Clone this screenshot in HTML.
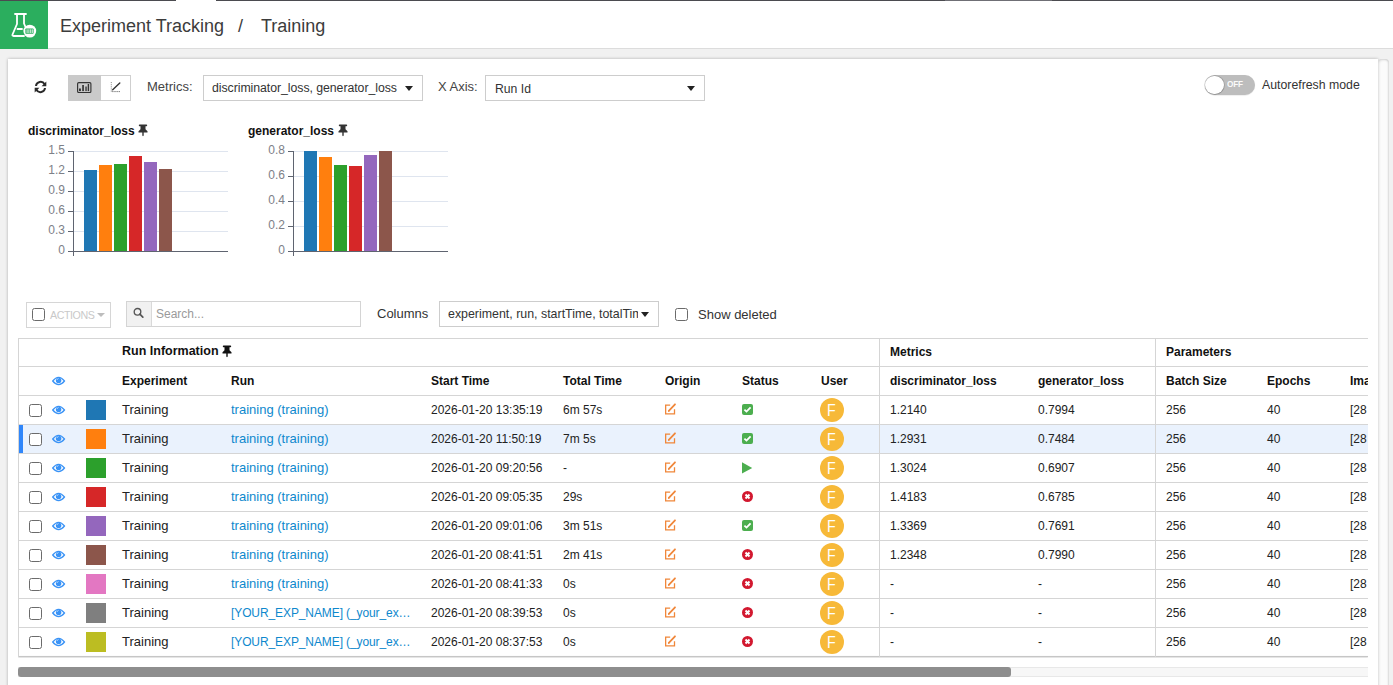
<!DOCTYPE html><html><head><meta charset="utf-8"><style>
*{box-sizing:border-box;margin:0;padding:0}
html,body{width:1393px;height:685px;overflow:hidden;background:#f1f1f1;font-family:"Liberation Sans",sans-serif;color:#222;font-size:13px}
div,span,svg{position:absolute}
.t{white-space:nowrap;line-height:1}
.b{font-weight:bold}
.caret{width:0;height:0;border-left:4px solid transparent;border-right:4px solid transparent;border-top:5px solid #222}
.cb{width:13px;height:13px;border:1.5px solid #6b6b6b;border-radius:2.5px;background:#fff}
.hl{height:1px;background:#d4d4d4}
.vl{width:1px;background:#d4d4d4}
</style></head><body>
<div style="left:0px;top:0px;width:1393px;height:49px;background:#fff;border-bottom:1px solid #dcdcdc"></div>
<div style="left:0px;top:0px;width:48px;height:49px;background:#2bae5e"></div>
<div style="left:0px;top:0px;width:176px;height:1px;background:#4b4b50"></div>
<div style="left:216px;top:0px;width:729px;height:1px;background:#4b4b50"></div>
<div style="left:945px;top:0px;width:107px;height:1px;background:#6f6f75"></div>
<div style="left:1052px;top:0px;width:341px;height:1px;background:#4b4b50"></div>
<svg style="left:0;top:0" width="48" height="48" viewBox="0 0 48 48">
<g fill="none" stroke="#fff" stroke-width="1.8" stroke-linejoin="round" stroke-linecap="round">
<path d="M15 14 H26"/>
<path d="M17 14 V24 L12.5 34.5 Q12 36 13.5 36 H24"/>
<path d="M24 14 V23.5 L25.5 27"/>
<path d="M17.5 29 H22"/>
</g>
<circle cx="29.8" cy="31.1" r="6.4" fill="#fff"/>
<rect x="25.4" y="28.5" width="8.2" height="5.3" rx="0.8" fill="#2bae5e"/>
<g stroke="#fff" stroke-width="0.85"><path d="M27.1 29.3 V33 M28.9 29.3 V33 M30.7 29.3 V33 M32.3 29.3 V33"/></g>
</svg>
<div class="t" style="left:60px;top:16.759999999999998px;font-size:18px;color:#3c3c3c;">Experiment Tracking</div>
<div class="t" style="left:238px;top:16.759999999999998px;font-size:18px;color:#3c3c3c;">/</div>
<div class="t" style="left:261px;top:16.759999999999998px;font-size:18px;color:#3c3c3c;">Training</div>
<div style="left:8px;top:59px;width:1370px;height:640px;background:#fff;box-shadow:0 0 3px rgba(0,0,0,.28)"></div>
<div style="left:1378px;top:59px;width:11px;height:640px;background:#fbfbfb;border-radius:4px;box-shadow:inset 1px 1px 2.5px rgba(0,0,0,.13), inset -1px 0 2px rgba(0,0,0,.13)"></div>
<svg style="left:34px;top:80px" width="13" height="14" viewBox="0 0 13 14">
<g fill="none" stroke="#2a2a2a" stroke-width="2">
<path d="M2 6 A4.6 4.6 0 0 1 10.6 4.2"/>
<path d="M11 8 A4.6 4.6 0 0 1 2.4 9.8"/>
</g>
<path d="M12.3 1.5 V6.2 H7.6 Z" fill="#2a2a2a"/>
<path d="M0.7 12.5 V7.8 H5.4 Z" fill="#2a2a2a"/>
</svg>
<div style="left:68px;top:75px;width:63px;height:26px;background:#fff;border:1px solid #cfcfcf"></div>
<div style="left:68px;top:75px;width:33px;height:26px;background:#cacaca"></div>
<svg style="left:77px;top:82px" width="15" height="11" viewBox="0 0 15 11">
<rect x="0.6" y="0.6" width="13.3" height="9.9" rx="1.2" fill="none" stroke="#333" stroke-width="1.15"/>
<rect x="2" y="6.5" width="1.9" height="2.6" fill="#333"/>
<rect x="5.2" y="3" width="1.7" height="6.1" fill="#333"/>
<rect x="8.2" y="4.5" width="1.7" height="4.6" fill="#555"/>
<rect x="10.7" y="2" width="1.4" height="7.1" fill="#333"/>
</svg>
<svg style="left:110px;top:82px" width="12" height="11" viewBox="0 0 12 11">
<path d="M2.7 7.7 L9.8 1" stroke="#333" stroke-width="1.4" stroke-linecap="round"/>
<path d="M1.3 0.2 V9.6" stroke="#666" stroke-width="0.9" stroke-dasharray="0.9 1.2" fill="none"/>
<path d="M2.4 9.6 H10.6" stroke="#444" stroke-width="1" stroke-dasharray="1 1.1" fill="none"/>
</svg>
<div class="t" style="left:147px;top:80.0px;font-size:13px;color:#444;">Metrics:</div>
<div style="left:203px;top:75px;width:220px;height:26px;background:#fff;border:1px solid #cdcdcd"></div>
<div class="t" style="left:212px;top:82.19px;font-size:12.3px;color:#333;letter-spacing:-0.05px">discriminator_loss, generator_loss</div>
<div style="left:405px;top:86px;width:8px;height:5px;width:0;height:0;border-left:4px solid transparent;border-right:4px solid transparent;border-top:5px solid #222"></div>
<div class="t" style="left:438px;top:80.0px;font-size:13px;color:#444;">X Axis:</div>
<div style="left:485px;top:75px;width:220px;height:26px;background:#fff;border:1px solid #cdcdcd"></div>
<div class="t" style="left:495px;top:82.67px;font-size:12.2px;color:#333;">Run Id</div>
<div style="left:686.5px;top:86.3px;width:8px;height:5px;width:0;height:0;border-left:4px solid transparent;border-right:4px solid transparent;border-top:5px solid #222"></div>
<div style="left:1205px;top:75px;width:50px;height:20px;background:#bdbdbd;border-radius:10px;box-shadow:0 0.5px 1px rgba(0,0,0,.12)"></div>
<div style="left:1205.4px;top:75.6px;width:18.8px;height:18.8px;background:#fff;border-radius:50%;box-shadow:0 0 0 0.8px rgba(0,0,0,.16), 0 0.5px 1px rgba(0,0,0,.2)"></div>
<div class="t" style="left:1227.3px;top:79.0px;font-size:9.8px;color:#fafafa;font-weight:bold;letter-spacing:-0.2px;transform:scaleX(0.84);transform-origin:0 0">OFF</div>
<div class="t" style="left:1262px;top:78.59px;font-size:12.3px;color:#333;">Autorefresh mode</div>
<div class="t" style="left:28px;top:124.84px;font-size:12px;color:#111;font-weight:bold;">discriminator_loss</div>
<div style="left:68px;top:251.0px;width:5px;height:1px;background:#5f6470"></div>
<div class="t" style="left:14px;width:51px;text-align:right;top:243.5px;font-size:12px;color:#7d8088">0</div>
<div style="left:73px;top:231.0px;width:155px;height:1px;background:#dfe5ef"></div>
<div style="left:68px;top:231.0px;width:5px;height:1px;background:#5f6470"></div>
<div class="t" style="left:14px;width:51px;text-align:right;top:223.5px;font-size:12px;color:#7d8088">0.3</div>
<div style="left:73px;top:211.0px;width:155px;height:1px;background:#dfe5ef"></div>
<div style="left:68px;top:211.0px;width:5px;height:1px;background:#5f6470"></div>
<div class="t" style="left:14px;width:51px;text-align:right;top:203.5px;font-size:12px;color:#7d8088">0.6</div>
<div style="left:73px;top:191.0px;width:155px;height:1px;background:#dfe5ef"></div>
<div style="left:68px;top:191.0px;width:5px;height:1px;background:#5f6470"></div>
<div class="t" style="left:14px;width:51px;text-align:right;top:183.5px;font-size:12px;color:#7d8088">0.9</div>
<div style="left:73px;top:171.0px;width:155px;height:1px;background:#dfe5ef"></div>
<div style="left:68px;top:171.0px;width:5px;height:1px;background:#5f6470"></div>
<div class="t" style="left:14px;width:51px;text-align:right;top:163.5px;font-size:12px;color:#7d8088">1.2</div>
<div style="left:73px;top:151.0px;width:155px;height:1px;background:#dfe5ef"></div>
<div style="left:68px;top:151.0px;width:5px;height:1px;background:#5f6470"></div>
<div class="t" style="left:14px;width:51px;text-align:right;top:143.5px;font-size:12px;color:#7d8088">1.5</div>
<div style="left:73px;top:151px;width:1px;height:105px;background:#5f6470"></div>
<div style="left:73px;top:251px;width:155px;height:1px;background:#5f6470"></div>
<div style="left:84.4px;top:170.06666666666666px;width:12.7px;height:80.93333333333334px;background:#1f77b4"></div>
<div style="left:99.4px;top:164.79333333333335px;width:12.7px;height:86.20666666666666px;background:#ff7f0e"></div>
<div style="left:114.4px;top:164.17333333333335px;width:12.7px;height:86.82666666666667px;background:#2ca02c"></div>
<div style="left:129.4px;top:156.44666666666666px;width:12.7px;height:94.55333333333333px;background:#d62728"></div>
<div style="left:144.4px;top:161.87333333333333px;width:12.7px;height:89.12666666666667px;background:#9467bd"></div>
<div style="left:159.4px;top:168.68px;width:12.7px;height:82.32px;background:#8c564b"></div>
<svg style="left:138px;top:124px" width="10" height="13" viewBox="0 0 10 13">
<path d="M1.6 0.4 H8.4 Q9.2 0.4 9.2 1.3 Q9.2 2.2 8.4 2.2 H7.5 V5.2 L9.5 7.3 V8.4 H5.7 V11.6 L5 12.3 L4.3 11.6 V8.4 H0.5 V7.3 L2.5 5.2 V2.2 H1.6 Q0.8 2.2 0.8 1.3 Q0.8 0.4 1.6 0.4 Z" fill="#333"/>
</svg>
<div class="t" style="left:248px;top:124.84px;font-size:12px;color:#111;font-weight:bold;">generator_loss</div>
<div style="left:288px;top:251.0px;width:5px;height:1px;background:#5f6470"></div>
<div class="t" style="left:234px;width:51px;text-align:right;top:243.5px;font-size:12px;color:#7d8088">0</div>
<div style="left:293px;top:226.0px;width:155px;height:1px;background:#dfe5ef"></div>
<div style="left:288px;top:226.0px;width:5px;height:1px;background:#5f6470"></div>
<div class="t" style="left:234px;width:51px;text-align:right;top:218.5px;font-size:12px;color:#7d8088">0.2</div>
<div style="left:293px;top:201.0px;width:155px;height:1px;background:#dfe5ef"></div>
<div style="left:288px;top:201.0px;width:5px;height:1px;background:#5f6470"></div>
<div class="t" style="left:234px;width:51px;text-align:right;top:193.5px;font-size:12px;color:#7d8088">0.4</div>
<div style="left:293px;top:176.0px;width:155px;height:1px;background:#dfe5ef"></div>
<div style="left:288px;top:176.0px;width:5px;height:1px;background:#5f6470"></div>
<div class="t" style="left:234px;width:51px;text-align:right;top:168.5px;font-size:12px;color:#7d8088">0.6</div>
<div style="left:293px;top:151.0px;width:155px;height:1px;background:#dfe5ef"></div>
<div style="left:288px;top:151.0px;width:5px;height:1px;background:#5f6470"></div>
<div class="t" style="left:234px;width:51px;text-align:right;top:143.5px;font-size:12px;color:#7d8088">0.8</div>
<div style="left:293px;top:151px;width:1px;height:105px;background:#5f6470"></div>
<div style="left:293px;top:251px;width:155px;height:1px;background:#5f6470"></div>
<div style="left:304.4px;top:151.075px;width:12.7px;height:99.925px;background:#1f77b4"></div>
<div style="left:319.4px;top:157.45000000000002px;width:12.7px;height:93.54999999999998px;background:#ff7f0e"></div>
<div style="left:334.4px;top:164.66250000000002px;width:12.7px;height:86.33749999999999px;background:#2ca02c"></div>
<div style="left:349.4px;top:166.1875px;width:12.7px;height:84.81249999999999px;background:#d62728"></div>
<div style="left:364.4px;top:154.8625px;width:12.7px;height:96.1375px;background:#9467bd"></div>
<div style="left:379.4px;top:151.125px;width:12.7px;height:99.875px;background:#8c564b"></div>
<svg style="left:337.5px;top:124px" width="10" height="13" viewBox="0 0 10 13">
<path d="M1.6 0.4 H8.4 Q9.2 0.4 9.2 1.3 Q9.2 2.2 8.4 2.2 H7.5 V5.2 L9.5 7.3 V8.4 H5.7 V11.6 L5 12.3 L4.3 11.6 V8.4 H0.5 V7.3 L2.5 5.2 V2.2 H1.6 Q0.8 2.2 0.8 1.3 Q0.8 0.4 1.6 0.4 Z" fill="#333"/>
</svg>
<div style="left:26px;top:302px;width:85px;height:26px;background:#fff;border:1px solid #d6d6d6"></div>
<div style="left:32px;top:308px;width:13px;height:13px;border:1.5px solid #6b6b6b;border-radius:2.5px;background:#fff"></div>
<div class="t" style="left:50px;top:310.44px;font-size:10.7px;color:#c9c9c9;letter-spacing:-0.45px">ACTIONS</div>
<div style="left:97px;top:313px;width:8px;height:4px;width:0;height:0;border-left:4px solid transparent;border-right:4px solid transparent;border-top:4px solid #bdbdbd"></div>
<div style="left:126px;top:301px;width:235px;height:26px;background:#fff;border:1px solid #d4d4d4"></div>
<div style="left:127px;top:302px;width:25px;height:24px;background:#f1f1f1;border-right:1px solid #d9d9d9"></div>
<svg style="left:133px;top:307px" width="11" height="12" viewBox="0 0 11 12">
<circle cx="4.5" cy="4.8" r="3.3" fill="none" stroke="#555" stroke-width="1.35"/>
<path d="M6.9 7.2 L9.8 10.2" stroke="#555" stroke-width="1.7" stroke-linecap="round"/>
</svg>
<div class="t" style="left:156px;top:307.84px;font-size:12px;color:#9a9a9a;">Search...</div>
<div class="t" style="left:377px;top:307.0px;font-size:13px;color:#333;">Columns</div>
<div style="left:439px;top:301px;width:220px;height:26px;background:#fff;border:1px solid #cdcdcd"></div>
<div style="left:448px;top:306px;width:190px;height:18px;overflow:hidden"><div class="t" style="left:0;top:2.3px;font-size:12.4px;color:#333">experiment, run, startTime, totalTime</div></div>
<div style="left:641px;top:312px;width:8px;height:5px;width:0;height:0;border-left:4px solid transparent;border-right:4px solid transparent;border-top:5px solid #222"></div>
<div style="left:675px;top:308px;width:13px;height:13px;border:1.5px solid #6b6b6b;border-radius:2.5px;background:#fff"></div>
<div class="t" style="left:698px;top:307.5px;font-size:13px;color:#333;">Show deleted</div>
<div style="left:18px;top:338px;width:1350px;height:320px;overflow:hidden">
<div style="left:0px;top:0px;width:1350px;height:320px;background:#fff"></div>
<div style="left:0px;top:86px;width:1350px;height:29px;background:#eaf2fd"></div>
<div style="left:1px;top:87px;width:4px;height:28px;background:#2f86fa"></div>
<div style="left:0px;top:0px;width:1350px;height:1px;background:#d5d5d5"></div>
<div style="left:0px;top:28px;width:1350px;height:1px;background:#d5d5d5"></div>
<div style="left:0px;top:57px;width:1350px;height:1px;background:#d5d5d5"></div>
<div style="left:0px;top:86px;width:1350px;height:1px;background:#d5d5d5"></div>
<div style="left:0px;top:115px;width:1350px;height:1px;background:#d5d5d5"></div>
<div style="left:0px;top:144px;width:1350px;height:1px;background:#d5d5d5"></div>
<div style="left:0px;top:173px;width:1350px;height:1px;background:#d5d5d5"></div>
<div style="left:0px;top:202px;width:1350px;height:1px;background:#d5d5d5"></div>
<div style="left:0px;top:231px;width:1350px;height:1px;background:#d5d5d5"></div>
<div style="left:0px;top:260px;width:1350px;height:1px;background:#d5d5d5"></div>
<div style="left:0px;top:289px;width:1350px;height:1px;background:#d5d5d5"></div>
<div style="left:0px;top:318px;width:1350px;height:1.2px;background:#c6c6c6;box-shadow:0 1px 2px rgba(0,0,0,.22)"></div>
<div style="left:0px;top:0px;width:1px;height:319px;background:#d5d5d5"></div>
<div style="left:861px;top:0px;width:1px;height:319px;background:#d5d5d5"></div>
<div style="left:1137px;top:0px;width:1px;height:319px;background:#d5d5d5"></div>
<div class="t" style="left:104px;top:7.420000000000016px;font-size:12.5px;color:#111;font-weight:bold;">Run Information</div>
<svg style="left:204px;top:7px" width="10" height="13" viewBox="0 0 10 13"><path d="M1.6 0.4 H8.4 Q9.2 0.4 9.2 1.3 Q9.2 2.2 8.4 2.2 H7.5 V5.2 L9.5 7.3 V8.4 H5.7 V11.6 L5 12.3 L4.3 11.6 V8.4 H0.5 V7.3 L2.5 5.2 V2.2 H1.6 Q0.8 2.2 0.8 1.3 Q0.8 0.4 1.6 0.4 Z" fill="#111"/></svg>
<div class="t" style="left:872px;top:7.839999999999975px;font-size:12px;color:#111;font-weight:bold;">Metrics</div>
<div class="t" style="left:1148px;top:7.839999999999975px;font-size:12px;color:#111;font-weight:bold;">Parameters</div>
<svg style="left:34px;top:37.69999999999999px" width="14" height="10" viewBox="0 0 14 10"><path d="M0.7 5 Q6.6 -2.2 12.5 5 Q6.6 12.2 0.7 5 Z" fill="none" stroke="#3a93f6" stroke-width="1.25"/><circle cx="6.6" cy="4.6" r="2.75" fill="#3a93f6"/><path d="M4.9 3.9 Q5.3 2.7 6.5 2.5" fill="none" stroke="#d6e8fd" stroke-width="0.8"/></svg>
<div class="t" style="left:104px;top:36.839999999999975px;font-size:12px;color:#111;font-weight:bold;">Experiment</div>
<div class="t" style="left:213px;top:36.839999999999975px;font-size:12px;color:#111;font-weight:bold;">Run</div>
<div class="t" style="left:413px;top:36.839999999999975px;font-size:12px;color:#111;font-weight:bold;">Start Time</div>
<div class="t" style="left:545px;top:36.839999999999975px;font-size:12px;color:#111;font-weight:bold;">Total Time</div>
<div class="t" style="left:647px;top:36.839999999999975px;font-size:12px;color:#111;font-weight:bold;">Origin</div>
<div class="t" style="left:724px;top:36.839999999999975px;font-size:12px;color:#111;font-weight:bold;">Status</div>
<div class="t" style="left:803px;top:36.839999999999975px;font-size:12px;color:#111;font-weight:bold;">User</div>
<div class="t" style="left:872px;top:36.839999999999975px;font-size:12px;color:#111;font-weight:bold;">discriminator_loss</div>
<div class="t" style="left:1020px;top:36.839999999999975px;font-size:12px;color:#111;font-weight:bold;">generator_loss</div>
<div class="t" style="left:1148px;top:36.839999999999975px;font-size:12px;color:#111;font-weight:bold;">Batch Size</div>
<div class="t" style="left:1249px;top:36.839999999999975px;font-size:12px;color:#111;font-weight:bold;">Epochs</div>
<div class="t" style="left:1332px;top:36.839999999999975px;font-size:12px;color:#111;font-weight:bold;">Image Size</div>
<div style="left:11px;top:66px;width:13px;height:13px;border:1.5px solid #6b6b6b;border-radius:2.5px;background:#fff"></div>
<svg style="left:34px;top:66.69999999999999px" width="14" height="10" viewBox="0 0 14 10"><path d="M0.7 5 Q6.6 -2.2 12.5 5 Q6.6 12.2 0.7 5 Z" fill="none" stroke="#3a93f6" stroke-width="1.25"/><circle cx="6.6" cy="4.6" r="2.75" fill="#3a93f6"/><path d="M4.9 3.9 Q5.3 2.7 6.5 2.5" fill="none" stroke="#d6e8fd" stroke-width="0.8"/></svg>
<div style="left:68px;top:62px;width:20px;height:20px;background:#1f77b4"></div>
<div class="t" style="left:104px;top:65.0px;font-size:13px;color:#222;">Training</div>
<div class="t" style="left:213px;top:65.0px;font-size:13px;color:#0e88cd;">training (training)</div>
<div class="t" style="left:413px;top:65.83999999999997px;font-size:12px;color:#222;">2026-01-20 13:35:19</div>
<div class="t" style="left:545px;top:65.83999999999997px;font-size:12px;color:#222;">6m 57s</div>
<svg style="left:647px;top:65.30000000000001px" width="12" height="12" viewBox="0 0 12 12"><path d="M5.2 2.2 H0.65 V10.85 H9.5 V6.2" fill="none" stroke="#f0873a" stroke-width="1.3"/><path d="M3.8 7.9 L10 1.3" stroke="#f0873a" stroke-width="1.8" stroke-linecap="round"/><path d="M3 9 L3.6 7.2 L4.6 8.2 Z" fill="#f0873a"/></svg>
<svg style="left:724px;top:66px" width="11" height="11" viewBox="0 0 11 11"><rect width="11" height="11" rx="2" fill="#4cae4f"/><path d="M2.4 5.6 L4.5 7.6 L8.6 3.3" fill="none" stroke="#fff" stroke-width="1.8"/></svg>
<div style="left:802px;top:60px;width:24px;height:24px;background:#f7b938;border-radius:50%"></div>
<div class="t" style="left:808.7px;top:64.02999999999997px;font-size:16.5px;color:#fff;transform:scaleX(0.86);transform-origin:0 0">F</div>
<div class="t" style="left:872px;top:65.83999999999997px;font-size:12px;color:#222;">1.2140</div>
<div class="t" style="left:1020px;top:65.83999999999997px;font-size:12px;color:#222;">0.7994</div>
<div class="t" style="left:1148px;top:65.83999999999997px;font-size:12px;color:#222;">256</div>
<div class="t" style="left:1249px;top:65.83999999999997px;font-size:12px;color:#222;">40</div>
<div class="t" style="left:1332px;top:65.83999999999997px;font-size:12px;color:#222;">[28</div>
<div style="left:11px;top:95px;width:13px;height:13px;border:1.5px solid #6b6b6b;border-radius:2.5px;background:#fff"></div>
<svg style="left:34px;top:95.69999999999999px" width="14" height="10" viewBox="0 0 14 10"><path d="M0.7 5 Q6.6 -2.2 12.5 5 Q6.6 12.2 0.7 5 Z" fill="none" stroke="#3a93f6" stroke-width="1.25"/><circle cx="6.6" cy="4.6" r="2.75" fill="#3a93f6"/><path d="M4.9 3.9 Q5.3 2.7 6.5 2.5" fill="none" stroke="#d6e8fd" stroke-width="0.8"/></svg>
<div style="left:68px;top:91px;width:20px;height:20px;background:#ff7f0e"></div>
<div class="t" style="left:104px;top:94.0px;font-size:13px;color:#222;">Training</div>
<div class="t" style="left:213px;top:94.0px;font-size:13px;color:#0e88cd;">training (training)</div>
<div class="t" style="left:413px;top:94.83999999999997px;font-size:12px;color:#222;">2026-01-20 11:50:19</div>
<div class="t" style="left:545px;top:94.83999999999997px;font-size:12px;color:#222;">7m 5s</div>
<svg style="left:647px;top:94.30000000000001px" width="12" height="12" viewBox="0 0 12 12"><path d="M5.2 2.2 H0.65 V10.85 H9.5 V6.2" fill="none" stroke="#f0873a" stroke-width="1.3"/><path d="M3.8 7.9 L10 1.3" stroke="#f0873a" stroke-width="1.8" stroke-linecap="round"/><path d="M3 9 L3.6 7.2 L4.6 8.2 Z" fill="#f0873a"/></svg>
<svg style="left:724px;top:95px" width="11" height="11" viewBox="0 0 11 11"><rect width="11" height="11" rx="2" fill="#4cae4f"/><path d="M2.4 5.6 L4.5 7.6 L8.6 3.3" fill="none" stroke="#fff" stroke-width="1.8"/></svg>
<div style="left:802px;top:89px;width:24px;height:24px;background:#f7b938;border-radius:50%"></div>
<div class="t" style="left:808.7px;top:93.02999999999997px;font-size:16.5px;color:#fff;transform:scaleX(0.86);transform-origin:0 0">F</div>
<div class="t" style="left:872px;top:94.83999999999997px;font-size:12px;color:#222;">1.2931</div>
<div class="t" style="left:1020px;top:94.83999999999997px;font-size:12px;color:#222;">0.7484</div>
<div class="t" style="left:1148px;top:94.83999999999997px;font-size:12px;color:#222;">256</div>
<div class="t" style="left:1249px;top:94.83999999999997px;font-size:12px;color:#222;">40</div>
<div class="t" style="left:1332px;top:94.83999999999997px;font-size:12px;color:#222;">[28</div>
<div style="left:11px;top:124px;width:13px;height:13px;border:1.5px solid #6b6b6b;border-radius:2.5px;background:#fff"></div>
<svg style="left:34px;top:124.69999999999999px" width="14" height="10" viewBox="0 0 14 10"><path d="M0.7 5 Q6.6 -2.2 12.5 5 Q6.6 12.2 0.7 5 Z" fill="none" stroke="#3a93f6" stroke-width="1.25"/><circle cx="6.6" cy="4.6" r="2.75" fill="#3a93f6"/><path d="M4.9 3.9 Q5.3 2.7 6.5 2.5" fill="none" stroke="#d6e8fd" stroke-width="0.8"/></svg>
<div style="left:68px;top:120px;width:20px;height:20px;background:#2ca02c"></div>
<div class="t" style="left:104px;top:123.0px;font-size:13px;color:#222;">Training</div>
<div class="t" style="left:213px;top:123.0px;font-size:13px;color:#0e88cd;">training (training)</div>
<div class="t" style="left:413px;top:123.83999999999997px;font-size:12px;color:#222;">2026-01-20 09:20:56</div>
<div class="t" style="left:545px;top:123.83999999999997px;font-size:12px;color:#222;">-</div>
<svg style="left:647px;top:123.30000000000001px" width="12" height="12" viewBox="0 0 12 12"><path d="M5.2 2.2 H0.65 V10.85 H9.5 V6.2" fill="none" stroke="#f0873a" stroke-width="1.3"/><path d="M3.8 7.9 L10 1.3" stroke="#f0873a" stroke-width="1.8" stroke-linecap="round"/><path d="M3 9 L3.6 7.2 L4.6 8.2 Z" fill="#f0873a"/></svg>
<svg style="left:724px;top:123.5px" width="12" height="12" viewBox="0 0 12 12"><path d="M0 0.3 L10.2 5.9 L0 11.5 Z" fill="#4cae4f"/></svg>
<div style="left:802px;top:118px;width:24px;height:24px;background:#f7b938;border-radius:50%"></div>
<div class="t" style="left:808.7px;top:122.02999999999997px;font-size:16.5px;color:#fff;transform:scaleX(0.86);transform-origin:0 0">F</div>
<div class="t" style="left:872px;top:123.83999999999997px;font-size:12px;color:#222;">1.3024</div>
<div class="t" style="left:1020px;top:123.83999999999997px;font-size:12px;color:#222;">0.6907</div>
<div class="t" style="left:1148px;top:123.83999999999997px;font-size:12px;color:#222;">256</div>
<div class="t" style="left:1249px;top:123.83999999999997px;font-size:12px;color:#222;">40</div>
<div class="t" style="left:1332px;top:123.83999999999997px;font-size:12px;color:#222;">[28</div>
<div style="left:11px;top:153px;width:13px;height:13px;border:1.5px solid #6b6b6b;border-radius:2.5px;background:#fff"></div>
<svg style="left:34px;top:153.7px" width="14" height="10" viewBox="0 0 14 10"><path d="M0.7 5 Q6.6 -2.2 12.5 5 Q6.6 12.2 0.7 5 Z" fill="none" stroke="#3a93f6" stroke-width="1.25"/><circle cx="6.6" cy="4.6" r="2.75" fill="#3a93f6"/><path d="M4.9 3.9 Q5.3 2.7 6.5 2.5" fill="none" stroke="#d6e8fd" stroke-width="0.8"/></svg>
<div style="left:68px;top:149px;width:20px;height:20px;background:#d62728"></div>
<div class="t" style="left:104px;top:152.0px;font-size:13px;color:#222;">Training</div>
<div class="t" style="left:213px;top:152.0px;font-size:13px;color:#0e88cd;">training (training)</div>
<div class="t" style="left:413px;top:152.83999999999997px;font-size:12px;color:#222;">2026-01-20 09:05:35</div>
<div class="t" style="left:545px;top:152.83999999999997px;font-size:12px;color:#222;">29s</div>
<svg style="left:647px;top:152.3px" width="12" height="12" viewBox="0 0 12 12"><path d="M5.2 2.2 H0.65 V10.85 H9.5 V6.2" fill="none" stroke="#f0873a" stroke-width="1.3"/><path d="M3.8 7.9 L10 1.3" stroke="#f0873a" stroke-width="1.8" stroke-linecap="round"/><path d="M3 9 L3.6 7.2 L4.6 8.2 Z" fill="#f0873a"/></svg>
<svg style="left:724px;top:153px" width="11" height="11" viewBox="0 0 11 11"><circle cx="5.5" cy="5.5" r="5.5" fill="#d2182f"/><path d="M3.5 3.5 L7.5 7.5 M7.5 3.5 L3.5 7.5" stroke="#fff" stroke-width="2"/></svg>
<div style="left:802px;top:147px;width:24px;height:24px;background:#f7b938;border-radius:50%"></div>
<div class="t" style="left:808.7px;top:151.02999999999997px;font-size:16.5px;color:#fff;transform:scaleX(0.86);transform-origin:0 0">F</div>
<div class="t" style="left:872px;top:152.83999999999997px;font-size:12px;color:#222;">1.4183</div>
<div class="t" style="left:1020px;top:152.83999999999997px;font-size:12px;color:#222;">0.6785</div>
<div class="t" style="left:1148px;top:152.83999999999997px;font-size:12px;color:#222;">256</div>
<div class="t" style="left:1249px;top:152.83999999999997px;font-size:12px;color:#222;">40</div>
<div class="t" style="left:1332px;top:152.83999999999997px;font-size:12px;color:#222;">[28</div>
<div style="left:11px;top:182px;width:13px;height:13px;border:1.5px solid #6b6b6b;border-radius:2.5px;background:#fff"></div>
<svg style="left:34px;top:182.70000000000005px" width="14" height="10" viewBox="0 0 14 10"><path d="M0.7 5 Q6.6 -2.2 12.5 5 Q6.6 12.2 0.7 5 Z" fill="none" stroke="#3a93f6" stroke-width="1.25"/><circle cx="6.6" cy="4.6" r="2.75" fill="#3a93f6"/><path d="M4.9 3.9 Q5.3 2.7 6.5 2.5" fill="none" stroke="#d6e8fd" stroke-width="0.8"/></svg>
<div style="left:68px;top:178px;width:20px;height:20px;background:#9467bd"></div>
<div class="t" style="left:104px;top:181.0px;font-size:13px;color:#222;">Training</div>
<div class="t" style="left:213px;top:181.0px;font-size:13px;color:#0e88cd;">training (training)</div>
<div class="t" style="left:413px;top:181.84000000000003px;font-size:12px;color:#222;">2026-01-20 09:01:06</div>
<div class="t" style="left:545px;top:181.84000000000003px;font-size:12px;color:#222;">3m 51s</div>
<svg style="left:647px;top:181.29999999999995px" width="12" height="12" viewBox="0 0 12 12"><path d="M5.2 2.2 H0.65 V10.85 H9.5 V6.2" fill="none" stroke="#f0873a" stroke-width="1.3"/><path d="M3.8 7.9 L10 1.3" stroke="#f0873a" stroke-width="1.8" stroke-linecap="round"/><path d="M3 9 L3.6 7.2 L4.6 8.2 Z" fill="#f0873a"/></svg>
<svg style="left:724px;top:182px" width="11" height="11" viewBox="0 0 11 11"><rect width="11" height="11" rx="2" fill="#4cae4f"/><path d="M2.4 5.6 L4.5 7.6 L8.6 3.3" fill="none" stroke="#fff" stroke-width="1.8"/></svg>
<div style="left:802px;top:176px;width:24px;height:24px;background:#f7b938;border-radius:50%"></div>
<div class="t" style="left:808.7px;top:180.02999999999997px;font-size:16.5px;color:#fff;transform:scaleX(0.86);transform-origin:0 0">F</div>
<div class="t" style="left:872px;top:181.84000000000003px;font-size:12px;color:#222;">1.3369</div>
<div class="t" style="left:1020px;top:181.84000000000003px;font-size:12px;color:#222;">0.7691</div>
<div class="t" style="left:1148px;top:181.84000000000003px;font-size:12px;color:#222;">256</div>
<div class="t" style="left:1249px;top:181.84000000000003px;font-size:12px;color:#222;">40</div>
<div class="t" style="left:1332px;top:181.84000000000003px;font-size:12px;color:#222;">[28</div>
<div style="left:11px;top:211px;width:13px;height:13px;border:1.5px solid #6b6b6b;border-radius:2.5px;background:#fff"></div>
<svg style="left:34px;top:211.70000000000005px" width="14" height="10" viewBox="0 0 14 10"><path d="M0.7 5 Q6.6 -2.2 12.5 5 Q6.6 12.2 0.7 5 Z" fill="none" stroke="#3a93f6" stroke-width="1.25"/><circle cx="6.6" cy="4.6" r="2.75" fill="#3a93f6"/><path d="M4.9 3.9 Q5.3 2.7 6.5 2.5" fill="none" stroke="#d6e8fd" stroke-width="0.8"/></svg>
<div style="left:68px;top:207px;width:20px;height:20px;background:#8c564b"></div>
<div class="t" style="left:104px;top:210.0px;font-size:13px;color:#222;">Training</div>
<div class="t" style="left:213px;top:210.0px;font-size:13px;color:#0e88cd;">training (training)</div>
<div class="t" style="left:413px;top:210.84000000000003px;font-size:12px;color:#222;">2026-01-20 08:41:51</div>
<div class="t" style="left:545px;top:210.84000000000003px;font-size:12px;color:#222;">2m 41s</div>
<svg style="left:647px;top:210.29999999999995px" width="12" height="12" viewBox="0 0 12 12"><path d="M5.2 2.2 H0.65 V10.85 H9.5 V6.2" fill="none" stroke="#f0873a" stroke-width="1.3"/><path d="M3.8 7.9 L10 1.3" stroke="#f0873a" stroke-width="1.8" stroke-linecap="round"/><path d="M3 9 L3.6 7.2 L4.6 8.2 Z" fill="#f0873a"/></svg>
<svg style="left:724px;top:211px" width="11" height="11" viewBox="0 0 11 11"><circle cx="5.5" cy="5.5" r="5.5" fill="#d2182f"/><path d="M3.5 3.5 L7.5 7.5 M7.5 3.5 L3.5 7.5" stroke="#fff" stroke-width="2"/></svg>
<div style="left:802px;top:205px;width:24px;height:24px;background:#f7b938;border-radius:50%"></div>
<div class="t" style="left:808.7px;top:209.02999999999997px;font-size:16.5px;color:#fff;transform:scaleX(0.86);transform-origin:0 0">F</div>
<div class="t" style="left:872px;top:210.84000000000003px;font-size:12px;color:#222;">1.2348</div>
<div class="t" style="left:1020px;top:210.84000000000003px;font-size:12px;color:#222;">0.7990</div>
<div class="t" style="left:1148px;top:210.84000000000003px;font-size:12px;color:#222;">256</div>
<div class="t" style="left:1249px;top:210.84000000000003px;font-size:12px;color:#222;">40</div>
<div class="t" style="left:1332px;top:210.84000000000003px;font-size:12px;color:#222;">[28</div>
<div style="left:11px;top:240px;width:13px;height:13px;border:1.5px solid #6b6b6b;border-radius:2.5px;background:#fff"></div>
<svg style="left:34px;top:240.70000000000005px" width="14" height="10" viewBox="0 0 14 10"><path d="M0.7 5 Q6.6 -2.2 12.5 5 Q6.6 12.2 0.7 5 Z" fill="none" stroke="#3a93f6" stroke-width="1.25"/><circle cx="6.6" cy="4.6" r="2.75" fill="#3a93f6"/><path d="M4.9 3.9 Q5.3 2.7 6.5 2.5" fill="none" stroke="#d6e8fd" stroke-width="0.8"/></svg>
<div style="left:68px;top:236px;width:20px;height:20px;background:#e377c2"></div>
<div class="t" style="left:104px;top:239.0px;font-size:13px;color:#222;">Training</div>
<div class="t" style="left:213px;top:239.0px;font-size:13px;color:#0e88cd;">training (training)</div>
<div class="t" style="left:413px;top:239.84000000000003px;font-size:12px;color:#222;">2026-01-20 08:41:33</div>
<div class="t" style="left:545px;top:239.84000000000003px;font-size:12px;color:#222;">0s</div>
<svg style="left:647px;top:239.29999999999995px" width="12" height="12" viewBox="0 0 12 12"><path d="M5.2 2.2 H0.65 V10.85 H9.5 V6.2" fill="none" stroke="#f0873a" stroke-width="1.3"/><path d="M3.8 7.9 L10 1.3" stroke="#f0873a" stroke-width="1.8" stroke-linecap="round"/><path d="M3 9 L3.6 7.2 L4.6 8.2 Z" fill="#f0873a"/></svg>
<svg style="left:724px;top:240px" width="11" height="11" viewBox="0 0 11 11"><circle cx="5.5" cy="5.5" r="5.5" fill="#d2182f"/><path d="M3.5 3.5 L7.5 7.5 M7.5 3.5 L3.5 7.5" stroke="#fff" stroke-width="2"/></svg>
<div style="left:802px;top:234px;width:24px;height:24px;background:#f7b938;border-radius:50%"></div>
<div class="t" style="left:808.7px;top:238.02999999999997px;font-size:16.5px;color:#fff;transform:scaleX(0.86);transform-origin:0 0">F</div>
<div class="t" style="left:872px;top:239.84000000000003px;font-size:12px;color:#222;">-</div>
<div class="t" style="left:1020px;top:239.84000000000003px;font-size:12px;color:#222;">-</div>
<div class="t" style="left:1148px;top:239.84000000000003px;font-size:12px;color:#222;">256</div>
<div class="t" style="left:1249px;top:239.84000000000003px;font-size:12px;color:#222;">40</div>
<div class="t" style="left:1332px;top:239.84000000000003px;font-size:12px;color:#222;">[28</div>
<div style="left:11px;top:269px;width:13px;height:13px;border:1.5px solid #6b6b6b;border-radius:2.5px;background:#fff"></div>
<svg style="left:34px;top:269.70000000000005px" width="14" height="10" viewBox="0 0 14 10"><path d="M0.7 5 Q6.6 -2.2 12.5 5 Q6.6 12.2 0.7 5 Z" fill="none" stroke="#3a93f6" stroke-width="1.25"/><circle cx="6.6" cy="4.6" r="2.75" fill="#3a93f6"/><path d="M4.9 3.9 Q5.3 2.7 6.5 2.5" fill="none" stroke="#d6e8fd" stroke-width="0.8"/></svg>
<div style="left:68px;top:265px;width:20px;height:20px;background:#7f7f7f"></div>
<div class="t" style="left:104px;top:268.0px;font-size:13px;color:#222;">Training</div>
<div class="t" style="left:213px;top:268.84000000000003px;font-size:12px;color:#0e88cd;letter-spacing:-0.1px">[YOUR_EXP_NAME] (_your_ex…</div>
<div class="t" style="left:413px;top:268.84000000000003px;font-size:12px;color:#222;">2026-01-20 08:39:53</div>
<div class="t" style="left:545px;top:268.84000000000003px;font-size:12px;color:#222;">0s</div>
<svg style="left:647px;top:268.29999999999995px" width="12" height="12" viewBox="0 0 12 12"><path d="M5.2 2.2 H0.65 V10.85 H9.5 V6.2" fill="none" stroke="#f0873a" stroke-width="1.3"/><path d="M3.8 7.9 L10 1.3" stroke="#f0873a" stroke-width="1.8" stroke-linecap="round"/><path d="M3 9 L3.6 7.2 L4.6 8.2 Z" fill="#f0873a"/></svg>
<svg style="left:724px;top:269px" width="11" height="11" viewBox="0 0 11 11"><circle cx="5.5" cy="5.5" r="5.5" fill="#d2182f"/><path d="M3.5 3.5 L7.5 7.5 M7.5 3.5 L3.5 7.5" stroke="#fff" stroke-width="2"/></svg>
<div style="left:802px;top:263px;width:24px;height:24px;background:#f7b938;border-radius:50%"></div>
<div class="t" style="left:808.7px;top:267.03px;font-size:16.5px;color:#fff;transform:scaleX(0.86);transform-origin:0 0">F</div>
<div class="t" style="left:872px;top:268.84000000000003px;font-size:12px;color:#222;">-</div>
<div class="t" style="left:1020px;top:268.84000000000003px;font-size:12px;color:#222;">-</div>
<div class="t" style="left:1148px;top:268.84000000000003px;font-size:12px;color:#222;">256</div>
<div class="t" style="left:1249px;top:268.84000000000003px;font-size:12px;color:#222;">40</div>
<div class="t" style="left:1332px;top:268.84000000000003px;font-size:12px;color:#222;">[28</div>
<div style="left:11px;top:298px;width:13px;height:13px;border:1.5px solid #6b6b6b;border-radius:2.5px;background:#fff"></div>
<svg style="left:34px;top:298.70000000000005px" width="14" height="10" viewBox="0 0 14 10"><path d="M0.7 5 Q6.6 -2.2 12.5 5 Q6.6 12.2 0.7 5 Z" fill="none" stroke="#3a93f6" stroke-width="1.25"/><circle cx="6.6" cy="4.6" r="2.75" fill="#3a93f6"/><path d="M4.9 3.9 Q5.3 2.7 6.5 2.5" fill="none" stroke="#d6e8fd" stroke-width="0.8"/></svg>
<div style="left:68px;top:294px;width:20px;height:20px;background:#bcbd22"></div>
<div class="t" style="left:104px;top:297.0px;font-size:13px;color:#222;">Training</div>
<div class="t" style="left:213px;top:297.84000000000003px;font-size:12px;color:#0e88cd;letter-spacing:-0.1px">[YOUR_EXP_NAME] (_your_ex…</div>
<div class="t" style="left:413px;top:297.84000000000003px;font-size:12px;color:#222;">2026-01-20 08:37:53</div>
<div class="t" style="left:545px;top:297.84000000000003px;font-size:12px;color:#222;">0s</div>
<svg style="left:647px;top:297.29999999999995px" width="12" height="12" viewBox="0 0 12 12"><path d="M5.2 2.2 H0.65 V10.85 H9.5 V6.2" fill="none" stroke="#f0873a" stroke-width="1.3"/><path d="M3.8 7.9 L10 1.3" stroke="#f0873a" stroke-width="1.8" stroke-linecap="round"/><path d="M3 9 L3.6 7.2 L4.6 8.2 Z" fill="#f0873a"/></svg>
<svg style="left:724px;top:298px" width="11" height="11" viewBox="0 0 11 11"><circle cx="5.5" cy="5.5" r="5.5" fill="#d2182f"/><path d="M3.5 3.5 L7.5 7.5 M7.5 3.5 L3.5 7.5" stroke="#fff" stroke-width="2"/></svg>
<div style="left:802px;top:292px;width:24px;height:24px;background:#f7b938;border-radius:50%"></div>
<div class="t" style="left:808.7px;top:296.03px;font-size:16.5px;color:#fff;transform:scaleX(0.86);transform-origin:0 0">F</div>
<div class="t" style="left:872px;top:297.84000000000003px;font-size:12px;color:#222;">-</div>
<div class="t" style="left:1020px;top:297.84000000000003px;font-size:12px;color:#222;">-</div>
<div class="t" style="left:1148px;top:297.84000000000003px;font-size:12px;color:#222;">256</div>
<div class="t" style="left:1249px;top:297.84000000000003px;font-size:12px;color:#222;">40</div>
<div class="t" style="left:1332px;top:297.84000000000003px;font-size:12px;color:#222;">[28</div>
</div>
<div style="left:18px;top:667px;width:1350px;height:10px;background:#f7f7f7;border-top:1px solid #e8e8e8;border-bottom:1px solid #e8e8e8"></div>
<div style="left:18px;top:667px;width:993px;height:10px;background:#8e8e8e;border-radius:3px"></div>
</body></html>
